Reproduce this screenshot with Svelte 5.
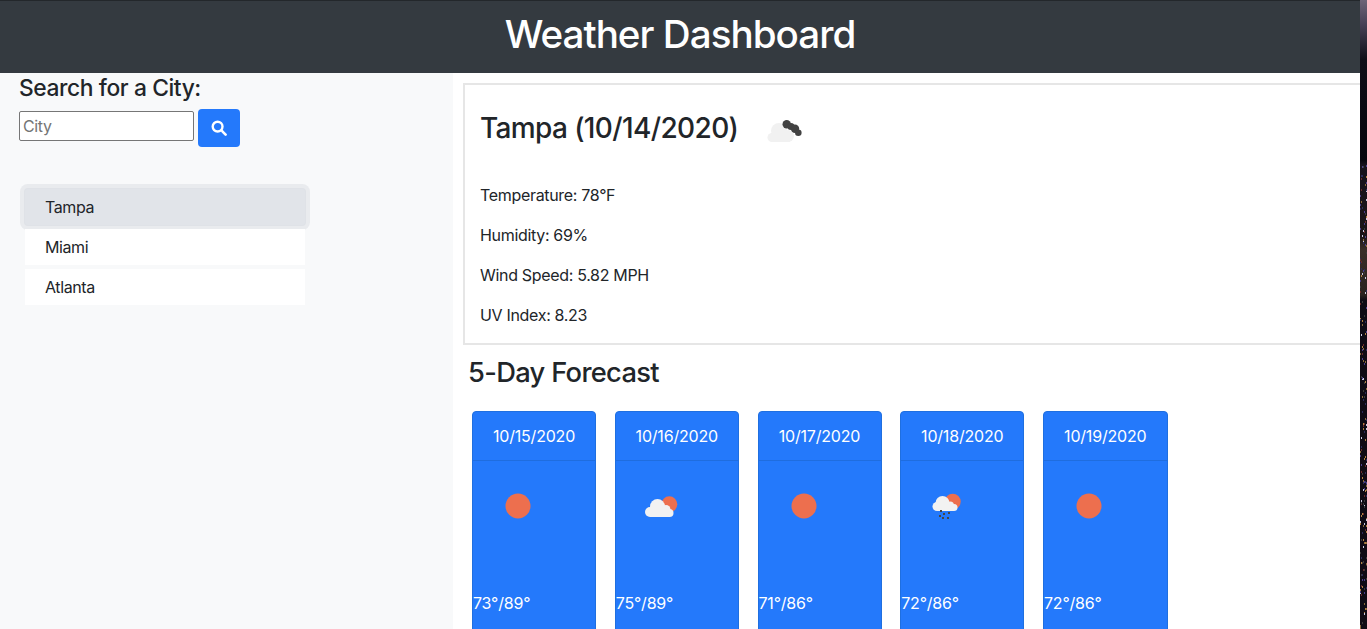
<script>
  const cities = ['Miami', 'Atlanta'];
  const days = [
    { date: '10/15/2020', icon: 'sun', temp: '73°/89°' },
    { date: '10/16/2020', icon: 'cloud', temp: '75°/89°' },
    { date: '10/17/2020', icon: 'sun', temp: '71°/86°' },
    { date: '10/18/2020', icon: 'rain', temp: '72°/86°' },
    { date: '10/19/2020', icon: 'sun', temp: '72°/86°' }
  ];
  const palette = ['#4a3f8a', '#8a6a3a', '#c9c9e0', '#6a2a2a', '#2c2c5a', '#b08040', '#3a3a3a'];
  let seed = 7;
  const rnd = () => (seed = (seed * 16807) % 2147483647) / 2147483647;
  const specks = Array.from({ length: 190 }, () => ({
    x: Math.floor(rnd() * 7),
    y: 165 + Math.floor(rnd() * 464),
    c: palette[Math.floor(rnd() * palette.length)]
  }));
</script>

<div class="screen">
  <div class="page">
    <header class="top"><h1>Weather Dashboard</h1></header>
    <div class="content">
      <aside class="side">
        <h2 class="search-title">Search for a City:</h2>
        <form class="search" onsubmit={(e) => e.preventDefault()}>
          <input type="text" placeholder="City" />
          <button type="submit" aria-label="Search">
            <svg viewBox="0 0 16 16" width="16" height="16">
              <circle cx="6.600" cy="6.600" r="4.900" fill="none" stroke="#fff" stroke-width="2.400" />
              <path d="M10.400 10.400 14.600 14.600" stroke="#fff" stroke-width="2.600" stroke-linecap="round" />
            </svg>
          </button>
        </form>
        <ul class="cities">
          <li class="active">Tampa</li>
          {#each cities as c}
            <li>{c}</li>
          {/each}
        </ul>
      </aside>
      <main class="main">
        <section class="current">
          <div class="current-head">
            <h2>Tampa (10/14/2020)</h2>
            <svg class="cur-icon" viewBox="0 0 40 30" width="40" height="30">
              <g fill="#f1f1f1">
                <circle cx="8" cy="24.500" r="4.500" />
                <circle cx="15" cy="18" r="8" />
                <circle cx="24" cy="23" r="6" />
                <rect x="8" y="22" width="18" height="7" />
              </g>
              <g fill="#424242">
                <circle cx="22.700" cy="11.300" r="4.200" />
                <circle cx="27" cy="13.500" r="3.600" />
                <circle cx="31" cy="15.700" r="4.200" />
                <circle cx="34.300" cy="19.700" r="3.300" />
              </g>
            </svg>
          </div>
          <p>Temperature: 78°F</p>
          <p>Humidity: 69%</p>
          <p>Wind Speed: 5.82 MPH</p>
          <p>UV Index: 8.23</p>
        </section>
        <h2 class="forecast-title">5-Day Forecast</h2>
        <div class="forecast">
          {#each days as d}
            <article class="day">
              <div class="day-head">{d.date}</div>
              <div class="day-body">
                <div class="icon-slot">
                  {#if d.icon === 'sun'}
                    <svg viewBox="0 0 50 50" width="50" height="50"><circle cx="25" cy="24" r="12.500" fill="#ed6f4e" /></svg>
                  {:else if d.icon === 'cloud'}
                    <svg viewBox="0 0 50 50" width="50" height="50">
                      <circle cx="33.300" cy="22.300" r="8" fill="#ed6f4e" />
                      <g fill="#f2f2f2">
                        <circle cx="14" cy="30" r="5" />
                        <circle cx="21.500" cy="24.500" r="7.500" />
                        <circle cx="30" cy="27.500" r="4.500" />
                        <circle cx="33.500" cy="31" r="4" />
                        <rect x="14" y="27" width="20" height="8" />
                      </g>
                    </svg>
                  {:else}
                    <svg viewBox="0 0 50 50" width="50" height="50">
                      <circle cx="31.700" cy="19.700" r="8" fill="#ed6f4e" />
                      <g fill="#f2f2f2">
                        <circle cx="16" cy="24.500" r="4.500" />
                        <circle cx="21.500" cy="21" r="7" />
                        <circle cx="29" cy="23.500" r="4" />
                        <circle cx="33" cy="25.500" r="3.500" />
                        <rect x="16" y="23" width="17" height="6" />
                      </g>
                      <path d="M19 28h2v2h-2zM18 33h2v2h-2zM22 31h2v2h-2zM27 30h2v2h-2zM21 35h2v2h-2zM26 35h2v2h-2z" fill="#454545" />
                    </svg>
                  {/if}
                </div>
                <p class="temp">{d.temp}</p>
              </div>
            </article>
          {/each}
        </div>
      </main>
    </div>
  </div>
  <div class="strip" aria-hidden="true">
    <svg width="7" height="629" viewBox="0 0 7 629">
      {#each specks as s}
        <rect x={s.x} y={s.y} width="1" height="2" fill={s.c} />
      {/each}
    </svg>
  </div>
</div>

<style>
  :global(body) {
    margin: 0;
    font-family: Inter, "Liberation Sans", sans-serif;
    color: #212529;
    overflow: hidden;
  }
  .screen { display: flex; width: 1367px; height: 629px; overflow: hidden; }
  .page { width: 1360px; flex: none; overflow: hidden; background: #fff; }
  .strip {
    flex: none;
    width: 7px;
    background: linear-gradient(#6d6478 0, #453f55 25px, #0e0e18 60px, #05050c 160px, #16121c 165px, #1a1417 235px, #3a2e28 250px, #2a221f 295px, #0f0b14 300px, #0f0b14 629px);
  }
  .strip svg { display: block; }
  .top {
    height: 73px;
    background: #343a40;
    border-top: 1px solid #23272b;
    box-sizing: border-box;
    text-align: center;
  }
  h1 { margin: 0; padding-top: 9px; font-size: 38.600px; line-height: 48px; font-weight: 500; letter-spacing: -0.025em; color: #fff; }
  .content { display: flex; height: 556px; }
  .side { width: 453px; flex: none; background: #f8f9fa; padding: 0 19px; box-sizing: border-box; letter-spacing: -0.025em; }
  .search-title { margin: 2px 0 8px; font-size: 22.800px; line-height: 26px; font-weight: 500; }
  .search { display: flex; gap: 4px; align-items: flex-start; }
  input {
    width: 175px;
    height: 30px;
    margin-top: 2px;
    box-sizing: border-box;
    border: 1px solid #767676;
    border-radius: 2px;
    padding: 0 3px;
    font: 16px Inter, sans-serif;
    letter-spacing: -0.025em;
    background: #fff;
  }
  input::placeholder { color: #757575; }
  button {
    width: 42px;
    height: 38px;
    border: 0;
    border-radius: 4px;
    background: #2479fb;
    display: flex;
    align-items: center;
    justify-content: center;
    padding: 0;
  }
  .cities { list-style: none; margin: 42px 0 0; padding: 0 0 0 6px; width: 280px; font-size: 16px; }
  .cities li {
    height: 36px;
    line-height: 36px;
    padding-left: 20px;
    background: #fff;
    margin-bottom: 4px;
    box-sizing: border-box;
  }
  .cities li.active {
    background: #e1e4e9;
    border-radius: 3px;
    box-shadow: 0 0 0 1px #dfe2e7, 0 0 0 5px #e9ebee;
  }
  .main { flex: 1; min-width: 0; padding: 10px 0 0 10px; }
  .current {
    width: 1000px;
    height: 262px;
    border: 2px solid #e6e6e6;
    box-sizing: border-box;
    padding: 0 15px;
    letter-spacing: -0.02em;
  }
  .current-head { display: flex; align-items: center; height: 85px; margin-bottom: 13px; }
  .current-head h2 { margin: 0; font-size: 28px; line-height: 34px; font-weight: 500; letter-spacing: -0.630px; }
  .cur-icon { margin-left: 26px; }
  .current p { margin: 0 0 16px; font-size: 16px; line-height: 24px; }
  .forecast-title { margin: 12px 0 0 5px; font-size: 27.300px; line-height: 31px; font-weight: 500; letter-spacing: -0.025em; }
  .forecast { display: flex; gap: 18.750px; margin: 23px 0 0 9px; }
  .day {
    width: 124px;
    height: 240px;
    flex: none;
    box-sizing: border-box;
    background: #2479fb;
    border: 1px solid #1f6fe0;
    border-radius: 4px;
    color: #fff;
    letter-spacing: -0.012em;
  }
  .day:last-child { width: 124.500px; }
  .day-head {
    height: 49px;
    line-height: 48px;
    text-align: center;
    font-size: 16px;
    border-bottom: 1px solid #1f6ddf;
    box-sizing: border-box;
  }
  .day-body { position: relative; height: 190px; }
  .icon-slot { padding: 21px 0 0 20px; height: 50px; }
  .icon-slot svg { display: block; }
  .temp { position: absolute; left: 0; top: 130px; margin: 0; font-size: 16px; line-height: 24px; }
</style>
